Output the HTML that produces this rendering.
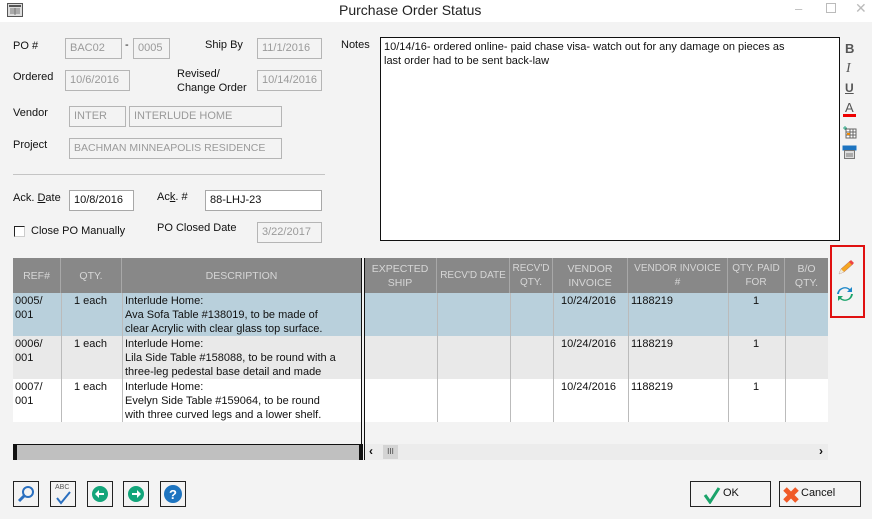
<!DOCTYPE html>
<html><head><style>
*{box-sizing:border-box;margin:0;padding:0}
body{width:872px;height:519px;background:#f3f3f3;font-family:"Liberation Sans",sans-serif;font-size:11px;color:#111;position:relative;overflow:hidden}
.a{position:absolute;white-space:nowrap}
.in{position:absolute;border:1px solid #b5b5b5;background:#f3f3f3;color:#9a9a9a;padding:3px 4px;height:21px;font-size:11px;white-space:nowrap;overflow:hidden}
.in.w{background:#fff;color:#111;border-color:#a8a8a8}
.hd{position:absolute;top:258px;height:35px;background:#888;color:#d6d6d6;font-size:10.5px;text-align:center;line-height:14px;display:flex;align-items:center;justify-content:center;border-right:1px solid #a8a8a8;white-space:nowrap}
.row{position:absolute;left:13px;width:815px;height:43px}
.c{position:absolute;font-size:11px;line-height:14px;padding-top:1px;white-space:nowrap}
.vl{position:absolute;width:1px;background:#bbb}
.btn{position:absolute;top:481px;width:26px;height:26px;border:1px solid #222;background:#f3f3f3}
</style></head><body>
<div class="a" style="left:0;top:0;width:872px;height:22px;background:#fff"></div>
<svg class="a" style="left:7px;top:3px" width="16" height="14"><rect x="0.5" y="0.5" width="15" height="13" fill="#ddd" stroke="#555"/><rect x="2" y="2" width="12" height="2" fill="#555"/><path d="M3 6h10M3 8h10M3 10h10M8 5v7" stroke="#777"/></svg>
<div class="a" style="left:339px;top:2px;font-size:14px;color:#222">Purchase Order Status</div>
<div class="a" style="left:795px;top:1px;color:#bbb;font-size:13px">–</div>
<div class="a" style="left:826px;top:3px;width:10px;height:10px;border:1px solid #bbb"></div>
<div class="a" style="left:855px;top:0px;color:#bbb;font-size:14px">✕</div>

<div class="a" style="left:13px;top:40px">PO #</div>
<div class="in" style="left:65px;top:38px;width:57px">BAC02</div>
<div class="a" style="left:125px;top:39px">-</div>
<div class="in" style="left:133px;top:38px;width:37px">0005</div>
<div class="a" style="left:205px;top:39px">Ship By</div>
<div class="in" style="left:257px;top:38px;width:65px">11/1/2016</div>
<div class="a" style="left:13px;top:71px">Ordered</div>
<div class="in" style="left:65px;top:70px;width:65px">10/6/2016</div>
<div class="a" style="left:177px;top:67px;line-height:14px">Revised/<br>Change Order</div>
<div class="in" style="left:257px;top:70px;width:65px">10/14/2016</div>
<div class="a" style="left:13px;top:107px">Vendor</div>
<div class="in" style="left:69px;top:106px;width:57px">INTER</div>
<div class="in" style="left:129px;top:106px;width:153px">INTERLUDE HOME</div>
<div class="a" style="left:13px;top:139px">Project</div>
<div class="in" style="left:69px;top:138px;width:213px;font-size:10.5px">BACHMAN MINNEAPOLIS RESIDENCE</div>
<div class="a" style="left:13px;top:174px;width:312px;height:1px;background:#c4c4c4"></div>
<div class="a" style="left:13px;top:192px">Ack. <u>D</u>ate</div>
<div class="in w" style="left:69px;top:190px;width:65px">10/8/2016</div>
<div class="a" style="left:157px;top:191px">Ac<u>k</u>. #</div>
<div class="in w" style="left:205px;top:190px;width:117px">88-LHJ-23</div>
<div class="a" style="left:14px;top:226px;width:11px;height:11px;border:1px solid #222;background:#fff;border-right-color:#ccc;border-bottom-color:#ccc"></div>
<div class="a" style="left:31px;top:225px">Close PO Manually</div>
<div class="a" style="left:157px;top:222px">PO Closed Date</div>
<div class="in" style="left:257px;top:222px;width:65px">3/22/2017</div>

<div class="a" style="left:341px;top:39px">Notes</div>
<div class="a" style="left:380px;top:37px;width:460px;height:204px;border:1px solid #111;background:#fff;padding:2px 3px;line-height:14px;font-size:11px">10/14/16- ordered online- paid chase visa- watch out for any damage on pieces as<br>last order had to be sent back-law</div>
<div class="a" style="left:845px;top:41px;font-weight:bold;color:#555;font-size:13px">B</div>
<div class="a" style="left:846px;top:61px;font-style:italic;color:#555;font-family:'Liberation Serif',serif;font-size:14px">I</div>
<div class="a" style="left:845px;top:81px;text-decoration:underline;color:#555;font-weight:bold;font-size:12px">U</div>
<div class="a" style="left:845px;top:100px;color:#555;font-size:13px">A</div>
<div class="a" style="left:843px;top:114px;width:13px;height:3px;background:#e00"></div>
<svg class="a" style="left:842px;top:125px" width="15" height="14"><path d="M1 3h4M3 1v4" stroke="#3a8"/><rect x="4" y="4" width="10" height="9" fill="#fff" stroke="#666"/><path d="M4 7h10M4 10h10M8 4v9M11 4v9" stroke="#666"/><rect x="5" y="8" width="3" height="2" fill="#e80"/></svg>
<svg class="a" style="left:842px;top:145px" width="15" height="14"><rect x="0.5" y="0.5" width="14" height="5" fill="#1d74c0"/><rect x="2.5" y="5.5" width="10" height="8" fill="#ddd" stroke="#777"/><path d="M4 9h7M4 11h7" stroke="#777"/></svg>

<div class="a" style="left:830px;top:245px;width:35px;height:73px;border:2px solid #e01010"></div>
<svg class="a" style="left:836px;top:259px" width="20" height="18"><path d="M3 15l2-5 9-8 3 3-9 8z" fill="#f5a623" stroke="#a66" stroke-width=".5"/><path d="M13 3l2-2 3 3-2 2z" fill="#e44"/><path d="M3 15l2-5 3 3z" fill="#eed"/></svg>
<svg class="a" style="left:836px;top:285px" width="18" height="18"><path d="M3 9a6 6 0 0 1 10-4l-2 2h5V2l-2 2A8 8 0 0 0 1 9z" fill="#1a86c8"/><path d="M15 9a6 6 0 0 1-10 4l2-2H2v5l2-2a8 8 0 0 0 13-5z" fill="#1aa36a"/></svg>

<div class="hd" style="left:13px;width:48px">REF#</div>
<div class="hd" style="left:61px;width:61px">QTY.</div>
<div class="hd" style="left:122px;width:239px;border:none">DESCRIPTION</div>
<div class="hd" style="left:364px;width:73px">EXPECTED<br>SHIP</div>
<div class="hd" style="left:437px;width:73px;font-size:10px">RECV'D DATE</div>
<div class="hd" style="left:510px;width:43px;font-size:10px">RECV'D<br>QTY.</div>
<div class="hd" style="left:553px;width:75px">VENDOR<br>INVOICE</div>
<div class="hd" style="left:628px;width:100px;font-size:10px">VENDOR INVOICE<br>#</div>
<div class="hd" style="left:728px;width:57px;font-size:10px">QTY. PAID<br>FOR</div>
<div class="hd" style="left:785px;width:43px;border:none">B/O<br>QTY.</div>

<div class="row" style="top:293px;background:#b9d0dc"></div>
<div class="row" style="top:336px;background:#e9e9e9"></div>
<div class="row" style="top:379px;background:#fff"></div>
<div class="vl" style="left:61px;top:293px;height:129px"></div>
<div class="vl" style="left:122px;top:293px;height:129px"></div>
<div class="vl" style="left:437px;top:293px;height:129px"></div>
<div class="vl" style="left:510px;top:293px;height:129px"></div>
<div class="vl" style="left:553px;top:293px;height:129px"></div>
<div class="vl" style="left:628px;top:293px;height:129px"></div>
<div class="vl" style="left:728px;top:293px;height:129px"></div>
<div class="vl" style="left:785px;top:293px;height:129px"></div>
<div class="a" style="left:361px;top:258px;width:4px;height:202px;border-left:1px solid #111;border-right:1px solid #111;background:#f3f3f3"></div>

<div class="c" style="left:15px;top:293px">0005/<br>001</div><div class="c" style="left:74px;top:293px">1 each</div>
<div class="c" style="left:125px;top:293px">Interlude Home:<br>Ava Sofa Table #138019, to be made of<br>clear Acrylic with clear glass top surface.</div>
<div class="c" style="left:561px;top:293px">10/24/2016</div><div class="c" style="left:631px;top:293px">1188219</div><div class="c" style="left:753px;top:293px">1</div>
<div class="c" style="left:15px;top:336px">0006/<br>001</div><div class="c" style="left:74px;top:336px">1 each</div>
<div class="c" style="left:125px;top:336px">Interlude Home:<br>Lila Side Table #158088, to be round with a<br>three-leg pedestal base detail and made</div>
<div class="c" style="left:561px;top:336px">10/24/2016</div><div class="c" style="left:631px;top:336px">1188219</div><div class="c" style="left:753px;top:336px">1</div>
<div class="c" style="left:15px;top:379px">0007/<br>001</div><div class="c" style="left:74px;top:379px">1 each</div>
<div class="c" style="left:125px;top:379px">Interlude Home:<br>Evelyn Side Table #159064, to be round<br>with three curved legs and a lower shelf.</div>
<div class="c" style="left:561px;top:379px">10/24/2016</div><div class="c" style="left:631px;top:379px">1188219</div><div class="c" style="left:753px;top:379px">1</div>

<div class="a" style="left:13px;top:444px;width:350px;height:16px;background:#c0c0c0;border-top:1px solid #111;border-left:4px solid #111;border-right:4px solid #111"></div>
<div class="a" style="left:365px;top:444px;width:463px;height:16px;background:#ececec"></div>
<div class="a" style="left:369px;top:444px;font-weight:bold;font-size:12px">‹</div>
<div class="a" style="left:383px;top:445px;width:15px;height:14px;background:#d4d4d4;font-size:8px;text-align:center;line-height:14px;color:#444">III</div>
<div class="a" style="left:819px;top:444px;font-weight:bold;font-size:12px">›</div>

<div class="btn" style="left:13px"><svg width="24" height="24"><circle cx="14" cy="10" r="5" fill="none" stroke="#2a6fbf" stroke-width="2"/><path d="M10 14l-5 5" stroke="#2a6fbf" stroke-width="3"/></svg></div>
<div class="btn" style="left:50px"><div class="a" style="left:4px;top:2px;font-size:7px;color:#555">ABC</div><svg class="a" style="left:3px;top:9px" width="20" height="14"><path d="M3 7l4 5 9-11" fill="none" stroke="#2a6fbf" stroke-width="2"/></svg></div>
<div class="btn" style="left:87px"><svg width="24" height="24"><circle cx="12" cy="12" r="8" fill="#12a57a"/><path d="M7 12l4-4v3h5v2h-5v3z" fill="#fff"/></svg></div>
<div class="btn" style="left:123px"><svg width="24" height="24"><circle cx="12" cy="12" r="8" fill="#12a57a"/><path d="M17 12l-4-4v3H8v2h5v3z" fill="#fff"/></svg></div>
<div class="btn" style="left:160px"><svg width="24" height="24"><circle cx="12" cy="12" r="9" fill="#1d74c0"/><text x="12" y="17" text-anchor="middle" fill="#fff" font-size="13" font-weight="bold" font-family="Liberation Sans">?</text></svg></div>
<div class="btn" style="left:690px;width:81px"><svg class="a" style="left:12px;top:4px" width="18" height="18"><path d="M2 9l5 7L16 2" fill="none" stroke="#1aa36a" stroke-width="3"/></svg><div class="a" style="left:32px;top:5px">OK</div></div>
<div class="btn" style="left:779px;width:82px"><svg class="a" style="left:2px;top:4px" width="18" height="18"><path d="M3 3l12 12M15 3L3 15" stroke="#f05a28" stroke-width="5"/></svg><div class="a" style="left:21px;top:5px">Cancel</div></div>
</body></html>
